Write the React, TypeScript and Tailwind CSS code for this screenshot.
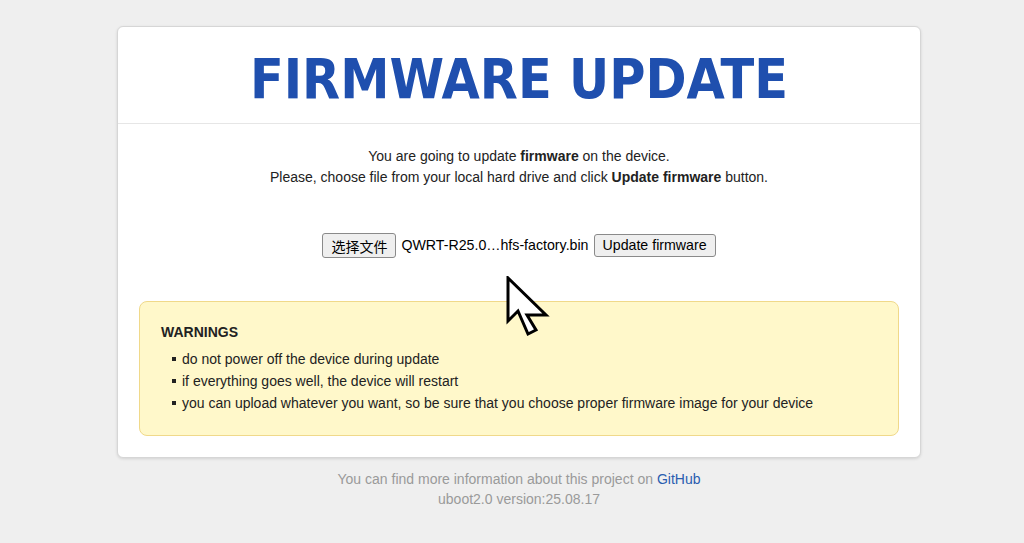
export default function App() {
  const warnings = [
    'do not power off the device during update',
    'if everything goes well, the device will restart',
    'you can upload whatever you want, so be sure that you choose proper firmware image for your device',
  ];

  return (
    <div className="relative min-h-[543px] bg-[#efefef] pt-[26px] font-['Liberation_Sans',Arial,sans-serif] text-[14px] text-[#222]">
      <div className="ml-[117px] w-[804px] rounded-md border border-[#d6d6d6] bg-white shadow-[0_1px_3px_rgba(0,0,0,0.12)]">
        <div className="border-b border-[#e6e6e6] pt-[25px] pb-[17px] text-center">
          <h1 className="font-['DejaVu_Sans_Condensed','DejaVu_Sans',sans-serif] text-[55px] font-bold leading-[54px] text-[#1f4fae]">
            FIRMWARE UPDATE
          </h1>
        </div>

        <div className="px-[21px] pt-[22px] pb-[21px]">
          <div className="text-center leading-[21px]">
            <p>
              You are going to update <b>firmware</b> on the device.
            </p>
            <p>
              Please, choose file from your local hard drive and click <b>Update firmware</b> button.
            </p>
          </div>

          <div className="mt-[45px] flex items-center justify-center">
            <button className="h-[25px] rounded-[3px] border border-[#8a8a8a] bg-[#efefef] px-[8px] font-['Noto_Sans_CJK_SC',sans-serif] text-[14px] leading-none text-black">
              选择文件
            </button>
            <span className="ml-[5px] text-[14.2px] text-black">QWRT-R25.0…hfs-factory.bin</span>
            <button className="ml-[5px] h-[23px] rounded-[3px] border border-[#8a8a8a] bg-[#efefef] px-[8px] text-[14.2px] leading-none text-black">
              Update firmware
            </button>
          </div>

          <div className="mt-[43px] rounded-lg border border-[#f0d98a] bg-[#fff8ca] px-[21px] pt-[20px] pb-[21px]">
            <h3 className="font-bold leading-[20px]">WARNINGS</h3>
            <ul className="mt-[6px]">
              {warnings.map((w) => (
                <li key={w} className="flex items-center leading-[22px]">
                  <span className="ml-[11px] mr-[6px] h-[4px] w-[4px] bg-[#222]" />
                  {w}
                </li>
              ))}
            </ul>
          </div>
        </div>
      </div>

      <div className="ml-[117px] w-[804px] pt-[11px] text-center leading-[20px] text-[#9a9a9a]">
        <p>
          You can find more information about this project on <a className="text-[#2a5db0]">GitHub</a>
        </p>
        <p>uboot2.0 version:25.08.17</p>
      </div>

      <svg className="absolute left-[506px] top-[276px]" width="44" height="62" viewBox="-2 -2 44 62">
        <path
          d="M0 0 L0 43 L10 33 L20 56 L28 52 L19 37 L38 37 Z"
          fill="white"
          stroke="black"
          strokeWidth="3"
          strokeLinejoin="miter"
        />
      </svg>
    </div>
  );
}
